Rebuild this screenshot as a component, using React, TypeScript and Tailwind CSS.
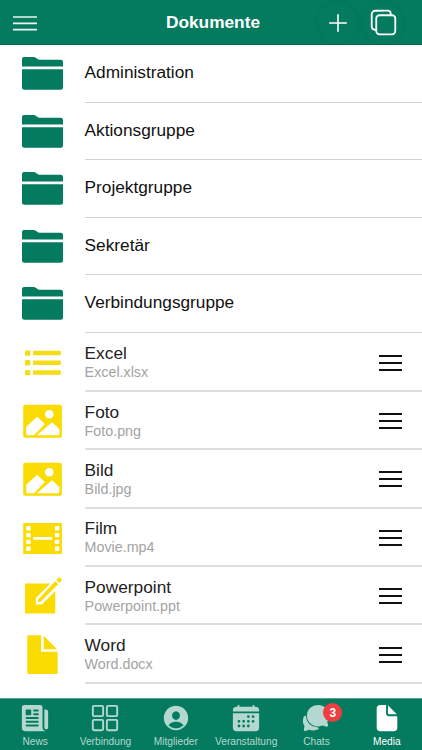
import {
  IoCalendar,
  IoChatbubbles,
  IoCopyOutline,
  IoDocument,
  IoGridOutline,
  IoNewspaper,
  IoPersonCircle,
} from "react-icons/io5";

const folders = [
  "Administration",
  "Aktionsgruppe",
  "Projektgruppe",
  "Sekretär",
  "Verbindungsgruppe",
];

const files = [
  { title: "Excel", name: "Excel.xlsx", icon: ListIcon },
  { title: "Foto", name: "Foto.png", icon: ImageIcon },
  { title: "Bild", name: "Bild.jpg", icon: ImageIcon },
  { title: "Film", name: "Movie.mp4", icon: FilmIcon },
  { title: "Powerpoint", name: "Powerpoint.ppt", icon: EditIcon },
  { title: "Word", name: "Word.docx", icon: DocIcon },
];

const tabs = [
  { label: "News", icon: IoNewspaper },
  { label: "Verbindung", icon: IoGridOutline },
  { label: "Mitglieder", icon: IoPersonCircle },
  { label: "Veranstaltung", icon: IoCalendar },
  { label: "Chats", icon: IoChatbubbles, badge: 3 },
  { label: "Media", icon: IoDocument, active: true },
];

function FolderIcon() {
  return (
    <svg viewBox="0 0 42 34" className="w-[42px] h-[34px]" fill="#047a5e">
      <path d="M0 10.5V3Q0 1 2 1H11.5Q12.8 1 13.8 1.8L15.5 3.1Q16.3 3.7 17.5 3.7H38.7Q41 3.7 41 5.9V10.5Z" />
      <path d="M0 13.3H41V31.2Q41 33.7 38.5 33.7H2.5Q0 33.7 0 31.2Z" />
    </svg>
  );
}

function ListIcon() {
  return (
    <svg viewBox="0 0 42 42" className="w-[42px] h-[42px]" fill="#f5dc14">
      <rect x="3" y="8.4" width="5.3" height="5.3" rx="1" />
      <rect x="3" y="18.1" width="5.3" height="5.3" rx="1" />
      <rect x="3" y="27.9" width="5.3" height="5.3" rx="1" />
      <rect x="11" y="8.7" width="27.8" height="4.6" rx="0.8" />
      <rect x="11" y="18.4" width="27.8" height="4.6" rx="0.8" />
      <rect x="11" y="28.2" width="27.8" height="4.6" rx="0.8" />
    </svg>
  );
}

function ImageIcon() {
  return (
    <svg viewBox="0 0 42 42" className="w-[42px] h-[42px]">
      <rect x="1.2" y="4.8" width="38.7" height="33" rx="2" fill="#fadc02" />
      <g fill="#fff">
        <circle cx="27.3" cy="14.3" r="4.3" />
        <path d="M4.2 26.8L15.2 16.8L22.9 24L11.9 35.2H5.7Q4.2 35.2 4.2 33.7Z" />
        <path d="M14.7 35.2L30.1 22.3L37.4 29V33.7Q37.4 35.2 35.9 35.2Z" />
      </g>
    </svg>
  );
}

function FilmIcon() {
  return (
    <svg viewBox="0 0 42 42" className="w-[42px] h-[42px]">
      <rect x="1.2" y="6" width="38.7" height="31" rx="0.8" fill="#fadc02" />
      <g fill="#fff">
        {[9, 15.9, 22.7, 29.6].map((y) => (
          <g key={y}>
            <rect x="4.2" y={y} width="4.4" height="4.4" rx="0.7" />
            <rect x="32.9" y={y} width="4.4" height="4.4" rx="0.7" />
          </g>
        ))}
        <rect x="11.2" y="20" width="19" height="2.8" rx="0.6" />
      </g>
    </svg>
  );
}

function EditIcon() {
  return (
    <svg viewBox="0 0 42 42" className="w-[42px] h-[42px]" fill="#fadc02">
      <path d="M4 8.6H28.3L13.9 23V29.4H19.9L33.3 16V37.6Q33.3 38.6 32.3 38.6H4Q3 38.6 3 37.6V9.6Q3 8.6 4 8.6Z" />
      <path d="M33.1 6.2L36.1 9.2L18.3 26.9H16.2V24.6Z" />
      <path d="M34.2 5L36 3.2Q37.5 1.8 39 3.2Q40.4 4.7 39 6.2L37.3 8Z" />
    </svg>
  );
}

function DocIcon() {
  return (
    <svg viewBox="0 0 42 42" className="w-[42px] h-[42px]" fill="#fadc02">
      <path d="M6.5 1.3H19V17.8H35.7V38.7Q35.7 40 34.5 40H6.6Q5.3 40 5.3 38.7V2.5Q5.3 1.3 6.5 1.3Z" />
      <path d="M21.7 1.8L35.1 15.2H21.7Z" />
    </svg>
  );
}

export default function App() {
  return (
    <div className="flex h-[750px] w-[422px] flex-col overflow-hidden bg-white font-['Liberation_Sans',Arial,sans-serif] text-[#111]">
      <header className="grid h-[45px] shrink-0 grid-cols-[122px_1fr_118px] items-center border-b border-[#04664f] bg-[#047a5e] text-white">
        <button className="ml-[13px] w-6 pt-px">
          <svg
            viewBox="0 0 24 16"
            className="h-4 w-6"
            stroke="#e9f5f1"
            strokeWidth="1.7"
          >
            <path d="M0 2H24M0 8.3H24M0 14.6H24" />
          </svg>
        </button>
        <h1 className="text-center text-[17.3px] leading-5 font-bold">
          Dokumente
        </h1>
        <div className="flex gap-[5px] pt-px pl-[14px]">
          <button className="flex size-10 items-center justify-center rounded-full shadow-[0_0_5px_rgba(0,0,0,0.06)]">
            <svg
              viewBox="0 0 20 20"
              className="size-5"
              stroke="currentColor"
              strokeWidth="1.6"
              strokeLinecap="round"
            >
              <path d="M10 1.7V18.3M1.7 10H18.3" />
            </svg>
          </button>
          <button className="flex size-10 items-center justify-center rounded-full shadow-[0_0_5px_rgba(0,0,0,0.06)]">
            <IoCopyOutline size={29} />
          </button>
        </div>
      </header>

      <main className="flex-1">
        <ul>
          {folders.map((folder) => (
            <li key={folder} className="flex h-[57.5px] pl-[22px]">
              <div className="flex w-[62.6px] items-center pb-px">
                <FolderIcon />
              </div>
              <div className="flex flex-1 items-center border-b border-[#d3d3d3] text-[17.25px]">
                {folder}
              </div>
            </li>
          ))}
        </ul>
        <ul className="pt-px">
          {files.map(({ title, name, icon: Icon }) => (
            <li key={title} className="flex h-[58.4px] pl-[22px]">
              <div className="flex w-[62.6px] items-center">
                <Icon />
              </div>
              <div className="flex flex-1 items-center justify-between border-b-2 border-[#dedede] pr-5">
                <div className="pt-px">
                  <p className="text-[17.3px] leading-5 text-[#222]">{title}</p>
                  <p className="text-[14.3px] leading-[18px] text-[#a3a3a3]">
                    {name}
                  </p>
                </div>
                <div className="flex w-[23px] flex-col gap-[5px] pt-[2px]">
                  <span className="h-[2px] bg-[#111]" />
                  <span className="h-[2px] bg-[#111]" />
                  <span className="h-[2px] bg-[#111]" />
                </div>
              </div>
            </li>
          ))}
        </ul>
      </main>

      <nav className="grid h-[52px] shrink-0 grid-cols-6 border-t border-[#5d9f8e] bg-[#047a5e]">
        {tabs.map(({ label, icon: Icon, badge, active }) => (
          <div
            key={label}
            className={`${
              active ? "text-white" : "text-[#b4d8cf]"
            } relative flex flex-col items-center pt-1`}
          >
            <Icon size={30} />
            <span className="pt-px text-[10.2px] leading-4 whitespace-nowrap">
              {label}
            </span>
            {badge && (
              <span className="absolute top-1 left-[42px] flex size-[19px] items-center justify-center rounded-full bg-[#ee3d43] text-[12px] font-bold text-white">
                {badge}
              </span>
            )}
          </div>
        ))}
      </nav>
    </div>
  );
}
